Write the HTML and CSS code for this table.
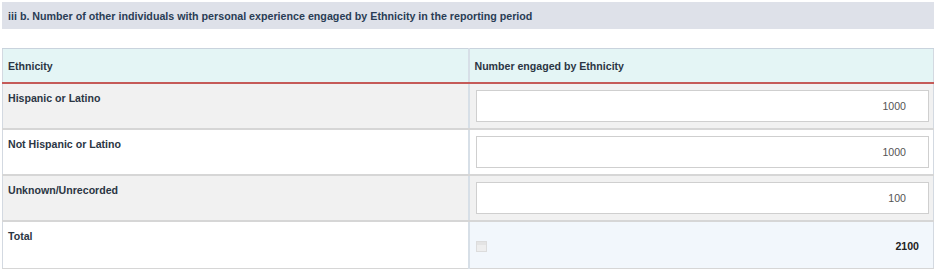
FILE: index.html
```html
<!DOCTYPE html>
<html lang="en">

<head>
    <meta charset="UTF-8">
    <meta name="viewport" content="width=device-width, initial-scale=1.0">
    <title>Ethnicity</title>
    <link rel="stylesheet" href="styles.css">
</head>

<body>
    <div class="section-title">iii b. Number of other individuals with personal experience engaged by Ethnicity in the reporting period</div>

    <table class="grid">
        <colgroup>
            <col class="col-name">
            <col>
        </colgroup>
        <thead>
            <tr>
                <th>Ethnicity</th>
                <th>Number engaged by Ethnicity</th>
            </tr>
        </thead>
        <tbody>
            <tr class="odd">
                <td class="label">Hispanic or Latino</td>
                <td class="field"><input type="text" class="num" value="1000"></td>
            </tr>
            <tr>
                <td class="label">Not Hispanic or Latino</td>
                <td class="field"><input type="text" class="num" value="1000"></td>
            </tr>
            <tr class="odd">
                <td class="label">Unknown/Unrecorded</td>
                <td class="field"><input type="text" class="num" value="100"></td>
            </tr>
            <tr class="total">
                <td class="label">Total</td>
                <td class="sum">
                    <div class="sum-row">
                        <!-- calculated field marker -->
                        <span class="calc"></span>
                        <span class="sum-value">2100</span>
                    </div>
                </td>
            </tr>
        </tbody>
    </table>
</body>

</html>
```

FILE: styles.css
```css
body {
    margin: 2px;
    background: white;
    font-family: "Liberation Sans", Arial, sans-serif;
    font-size: 10.6px;
    color: #2b3644;
}

.section-title {
    background: #dee1e9;
    color: #2a3d55;
    font-weight: bold;
    font-size: 10.7px;
    height: 27px;
    line-height: 28px;
    padding: 0 6px;
}

.grid {
    width: 932px;
    margin-top: 19px;
    table-layout: fixed;
    border-collapse: collapse;
    border-left: 1px solid #d3d9e1;
    border-right: 1px solid #d3d9e1;
}

.col-name {
    width: 466px;
}

.grid th {
    background: #e4f5f5;
    text-align: left;
    font-weight: bold;
    height: 33px;
    padding: 0 5px;
    border-top: 1px solid #c9d3dd;
    border-bottom: 2px solid #c55a58;
    color: #2b3644;
}

.grid td {
    vertical-align: top;
    height: 32px;
    border-bottom: 2px solid #d6d6d6;
    font-weight: bold;
}

.grid th:first-child,
.grid td:first-child {
    border-right: 2px solid #d7dfe7;
}

.grid td.label {
    padding: 8px 5px 4px 5px;
}

.grid td.field {
    padding: 6px 4px 6px 6px;
}

.grid tr.odd td {
    background: #f1f1f1;
}

.num {
    display: block;
    box-sizing: border-box;
    width: 100%;
    height: 32px;
    margin: 0;
    padding: 0 22px 0 8px;
    border: 1px solid #cfcfcf;
    background: white;
    text-align: right;
    font-family: "Liberation Sans", Arial, sans-serif;
    font-size: 10.6px;
    color: #555555;
}

.grid tr.total td {
    height: 34px;
    border-bottom: 1px solid #d6d6d6;
}

.grid tr.total td.sum {
    background: #f2f7fc;
    height: 28px;
    padding: 18px 14px 0 6px;
}

.sum-row {
    display: flex;
    align-items: center;
    justify-content: space-between;
}

.calc {
    width: 9px;
    height: 9px;
    border: 1px solid #dcdcdc;
    background: linear-gradient(#e4e4e4 0 3px, #eeeeee 3px);
}

.sum-value {
    font-weight: bold;
    color: #222;
}
```
